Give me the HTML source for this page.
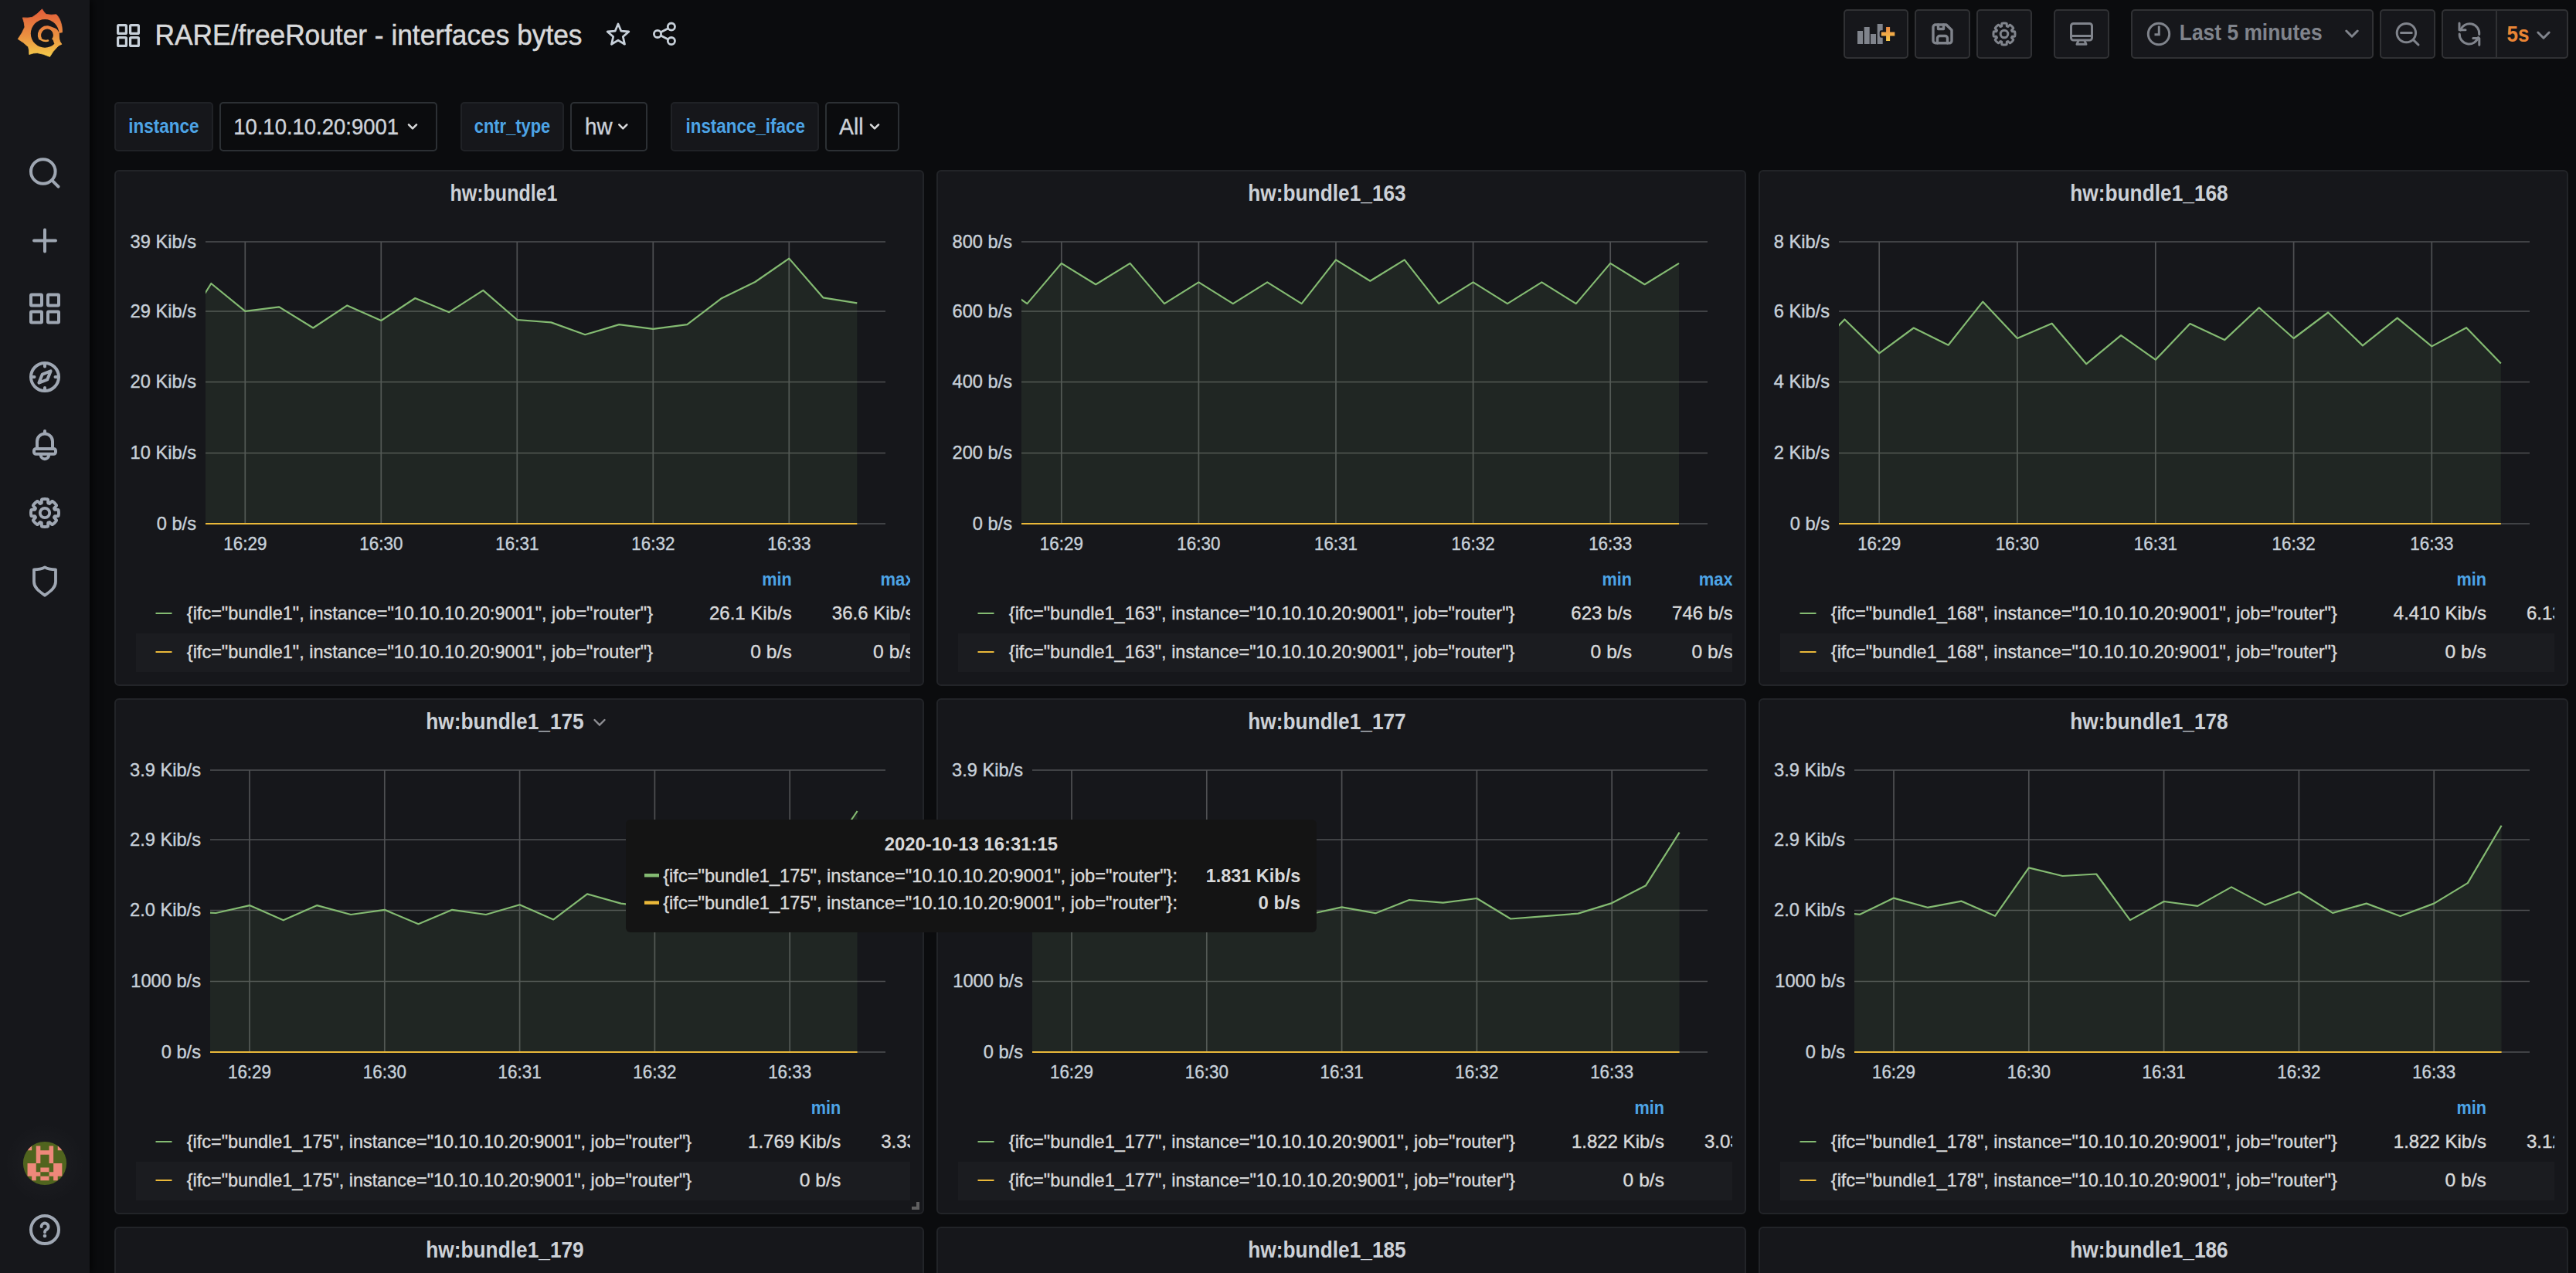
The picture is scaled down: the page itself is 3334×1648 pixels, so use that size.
<!DOCTYPE html><html><head><meta charset="utf-8"><title>RARE/freeRouter - interfaces bytes - Grafana</title><style>html,body{margin:0;padding:0;width:3334px;height:1648px;overflow:hidden;background:#0b0c0e;font-family:"Liberation Sans", sans-serif;}
.a{position:absolute;box-sizing:border-box}
.side{left:0;top:0;width:116px;height:1648px;background:#16171b;box-shadow:3px 0 10px rgba(0,0,0,0.75)}
.btn{background:#16171b;border:2px solid #303134;border-radius:5px;height:64px;top:12px}
.lbl{background:#16171b;border:2px solid #202226;border-radius:5px;height:64px;top:132px}
.val{background:#0b0c0e;border:2px solid #2c3034;border-radius:5px;height:64px;top:132px}
.panel{background:#16171b;border:2px solid #222428;border-radius:6px;width:1048px;height:668px}
.tip{background:#141414;border-radius:6px}
svg{position:absolute;left:0;top:0}
svg text{font-family:"Liberation Sans", sans-serif;paint-order:stroke fill}
svg text.r{stroke:currentColor}
</style></head><body><div class="a side"></div><div class="a btn" style="left:2386px;width:84px"></div><div class="a btn" style="left:2478px;width:72px"></div><div class="a btn" style="left:2558px;width:72px"></div><div class="a btn" style="left:2658px;width:72px"></div><div class="a btn" style="left:2758px;width:314px"></div><div class="a btn" style="left:3080px;width:72px"></div><div class="a btn" style="left:3160px;width:164px"></div><div class="a lbl" style="left:148px;width:128px"></div><div class="a lbl" style="left:596px;width:134px"></div><div class="a lbl" style="left:868px;width:192px"></div><div class="a val" style="left:284px;width:282px"></div><div class="a val" style="left:738px;width:100px"></div><div class="a val" style="left:1068px;width:96px"></div><div class="a panel" style="left:148px;top:220px"></div><div class="a panel" style="left:1212px;top:220px"></div><div class="a panel" style="left:2276px;top:220px"></div><div class="a panel" style="left:148px;top:904px"></div><div class="a panel" style="left:1212px;top:904px"></div><div class="a panel" style="left:2276px;top:904px"></div><div class="a panel" style="left:148px;top:1588px"></div><div class="a panel" style="left:1212px;top:1588px"></div><div class="a panel" style="left:2276px;top:1588px"></div><svg width="3334" height="1648" viewBox="0 0 3334 1648"><defs>
<linearGradient id="glogo" gradientUnits="userSpaceOnUse" x1="0" y1="14" x2="0" y2="73">
<stop offset="0" stop-color="#e3603a"/><stop offset="0.55" stop-color="#eb9040"/><stop offset="1" stop-color="#f4ca4a"/></linearGradient>
<linearGradient id="gadd" x1="0" y1="0" x2="0" y2="1">
<stop offset="0" stop-color="#ea8a43"/><stop offset="1" stop-color="#f8c94b"/></linearGradient>
</defs><path d="M54.5,11.8 Q57.01,16.44 59.9,18.5 Q65.79,19.80 72.9,18.8 C76.8,22.5 80.8,31 80.5,41.8 Q77.15,42.29 76.4,42.6 Q75.36,46.74 76.9,51.2 Q77.19,53.72 79.9,57.2 Q75.75,58.50 73.8,61.2 Q68.41,66.23 64.5,73.4 Q56.19,69.66 48.2,68.5 Q43.47,68.29 37.8,70.5 Q37.97,64.55 36.6,60.7 Q31.06,55.02 23.2,50.5 Q28.90,42.86 32,35.1 Q31.73,29.72 29.3,22.9 Q36.37,23.61 41.8,22.3 Q48.38,18.33 54.5,11.8 Z" fill="url(#glogo)" stroke="url(#glogo)" stroke-width="0.8" stroke-linejoin="round"/><circle cx="58.1" cy="43.4" r="18.3" fill="#16171b"/><path d="M68.74,51.99 A10.1,10.1 0 1 0 52.25,50.55" fill="none" stroke="url(#glogo)" stroke-width="4.3"/><path d="M52.25,50.55 Q57.96,53.86 62,52.6" fill="none" stroke="url(#glogo)" stroke-width="2.6" stroke-linecap="round"/><path d="M66,36.8 L67.1,34.9 Q70.5,35.6 72.4,37 Q74.4,38.6 75.3,40.2 L76.6,42.4 L76.9,51.4 L73.5,57.5 L70.3,56.8 L68.7,52 L71.1,45.5 L69.7,40.5 Z" fill="url(#glogo)"/><g fill="none" stroke="#9fa7b3" stroke-width="4" stroke-linecap="round" stroke-linejoin="round"><circle cx="55.8" cy="222" r="15.8"/><path d="M67.5,233.7 L75.5,241.7"/><path d="M44,311.5 H72 M58,297.5 V325.5"/><rect x="40" y="381.5" width="14" height="14" rx="1"/><rect x="62" y="381.5" width="14" height="14" rx="1"/><rect x="40" y="403.5" width="14" height="14" rx="1"/><rect x="62" y="403.5" width="14" height="14" rx="1"/><circle cx="58" cy="488" r="18"/><path d="M58,470 V474.5 M58,502 V506 M40,488 H44.5 M71.5,488 H76"/><path d="M65.6,480.4 L61.2,491.4 L50.4,495.6 L54.8,484.6 Z" stroke-width="4"/><path d="M58,558 V560.5"/><path d="M48,581 V571.5 A10,10 0 0 1 68,571.5 V581"/><rect x="44" y="581" width="28" height="6.8" rx="2.5"/><path d="M52.8,589 A5.2,5.2 0 0 0 63.2,589"/><path d="M76.00,664.00 L76.00,664.39 L75.98,664.79 L75.96,665.18 L75.93,665.57 L75.89,665.96 L75.85,666.35 L75.79,666.74 L75.73,667.13 L75.65,667.51 L75.52,667.88 L74.83,668.12 L73.64,668.19 L72.30,668.17 L71.22,668.17 L70.69,668.31 L70.59,668.58 L70.49,668.86 L70.38,669.13 L70.27,669.40 L70.14,669.66 L70.02,669.93 L70.29,670.40 L71.06,671.17 L72.02,672.10 L72.81,672.99 L73.14,673.64 L72.97,674.00 L72.74,674.32 L72.52,674.64 L72.28,674.96 L72.04,675.27 L71.79,675.57 L71.53,675.87 L71.27,676.16 L71.00,676.45 L70.73,676.73 L70.45,677.00 L70.16,677.27 L69.87,677.53 L69.57,677.79 L69.27,678.04 L68.96,678.28 L68.64,678.52 L68.32,678.74 L68.00,678.97 L67.64,679.14 L66.99,678.81 L66.10,678.02 L65.17,677.06 L64.40,676.29 L63.93,676.02 L63.66,676.14 L63.40,676.27 L63.13,676.38 L62.86,676.49 L62.58,676.59 L62.31,676.69 L62.17,677.22 L62.17,678.30 L62.19,679.64 L62.12,680.83 L61.88,681.52 L61.51,681.65 L61.13,681.73 L60.74,681.79 L60.35,681.85 L59.96,681.89 L59.57,681.93 L59.18,681.96 L58.79,681.98 L58.39,682.00 L58.00,682.00 L57.61,682.00 L57.21,681.98 L56.82,681.96 L56.43,681.93 L56.04,681.89 L55.65,681.85 L55.26,681.79 L54.87,681.73 L54.49,681.65 L54.12,681.52 L53.88,680.83 L53.81,679.64 L53.83,678.30 L53.83,677.22 L53.69,676.69 L53.42,676.59 L53.14,676.49 L52.87,676.38 L52.60,676.27 L52.34,676.14 L52.07,676.02 L51.60,676.29 L50.83,677.06 L49.90,678.02 L49.01,678.81 L48.36,679.14 L48.00,678.97 L47.68,678.74 L47.36,678.52 L47.04,678.28 L46.73,678.04 L46.43,677.79 L46.13,677.53 L45.84,677.27 L45.55,677.00 L45.27,676.73 L45.00,676.45 L44.73,676.16 L44.47,675.87 L44.21,675.57 L43.96,675.27 L43.72,674.96 L43.48,674.64 L43.26,674.32 L43.03,674.00 L42.86,673.64 L43.19,672.99 L43.98,672.10 L44.94,671.17 L45.71,670.40 L45.98,669.93 L45.86,669.66 L45.73,669.40 L45.62,669.13 L45.51,668.86 L45.41,668.58 L45.31,668.31 L44.78,668.17 L43.70,668.17 L42.36,668.19 L41.17,668.12 L40.48,667.88 L40.35,667.51 L40.27,667.13 L40.21,666.74 L40.15,666.35 L40.11,665.96 L40.07,665.57 L40.04,665.18 L40.02,664.79 L40.00,664.39 L40.00,664.00 L40.00,663.61 L40.02,663.21 L40.04,662.82 L40.07,662.43 L40.11,662.04 L40.15,661.65 L40.21,661.26 L40.27,660.87 L40.35,660.49 L40.48,660.12 L41.17,659.88 L42.36,659.81 L43.70,659.83 L44.78,659.83 L45.31,659.69 L45.41,659.42 L45.51,659.14 L45.62,658.87 L45.73,658.60 L45.86,658.34 L45.98,658.07 L45.71,657.60 L44.94,656.83 L43.98,655.90 L43.19,655.01 L42.86,654.36 L43.03,654.00 L43.26,653.68 L43.48,653.36 L43.72,653.04 L43.96,652.73 L44.21,652.43 L44.47,652.13 L44.73,651.84 L45.00,651.55 L45.27,651.27 L45.55,651.00 L45.84,650.73 L46.13,650.47 L46.43,650.21 L46.73,649.96 L47.04,649.72 L47.36,649.48 L47.68,649.26 L48.00,649.03 L48.36,648.86 L49.01,649.19 L49.90,649.98 L50.83,650.94 L51.60,651.71 L52.07,651.98 L52.34,651.86 L52.60,651.73 L52.87,651.62 L53.14,651.51 L53.42,651.41 L53.69,651.31 L53.83,650.78 L53.83,649.70 L53.81,648.36 L53.88,647.17 L54.12,646.48 L54.49,646.35 L54.87,646.27 L55.26,646.21 L55.65,646.15 L56.04,646.11 L56.43,646.07 L56.82,646.04 L57.21,646.02 L57.61,646.00 L58.00,646.00 L58.39,646.00 L58.79,646.02 L59.18,646.04 L59.57,646.07 L59.96,646.11 L60.35,646.15 L60.74,646.21 L61.13,646.27 L61.51,646.35 L61.88,646.48 L62.12,647.17 L62.19,648.36 L62.17,649.70 L62.17,650.78 L62.31,651.31 L62.58,651.41 L62.86,651.51 L63.13,651.62 L63.40,651.73 L63.66,651.86 L63.93,651.98 L64.40,651.71 L65.17,650.94 L66.10,649.98 L66.99,649.19 L67.64,648.86 L68.00,649.03 L68.32,649.26 L68.64,649.48 L68.96,649.72 L69.27,649.96 L69.57,650.21 L69.87,650.47 L70.16,650.73 L70.45,651.00 L70.73,651.27 L71.00,651.55 L71.27,651.84 L71.53,652.13 L71.79,652.43 L72.04,652.73 L72.28,653.04 L72.52,653.36 L72.74,653.68 L72.97,654.00 L73.14,654.36 L72.81,655.01 L72.02,655.90 L71.06,656.83 L70.29,657.60 L70.02,658.07 L70.14,658.34 L70.27,658.60 L70.38,658.87 L70.49,659.14 L70.59,659.42 L70.69,659.69 L71.22,659.83 L72.30,659.83 L73.64,659.81 L74.83,659.88 L75.52,660.12 L75.65,660.49 L75.73,660.87 L75.79,661.26 L75.85,661.65 L75.89,662.04 L75.93,662.43 L75.96,662.82 L75.98,663.21 L76.00,663.61Z" stroke-width="3.9" stroke-linejoin="round"/><circle cx="58" cy="664" r="6.2" stroke-width="3.8"/><path d="M44,737.3 C49.5,737.3 54,736.5 58,734.3 C62,736.5 66.5,737.3 72,737.3 V753.3 C72,760.5 66,765 58,770.8 C50,765 44,760.5 44,753.3 Z" stroke-width="3.8"/><circle cx="58" cy="1592" r="18"/></g><path d="M53.6,1588.2 A4.5,4.5 0 1 1 60.8,1591.6 Q58,1592.8 58,1595.2" fill="none" stroke="#9fa7b3" stroke-width="3.8" stroke-linecap="round" stroke-linejoin="round"/><circle cx="58" cy="1600" r="2.3" fill="#9fa7b3"/><radialGradient id="halo"><stop offset="0" stop-color="#ffffff" stop-opacity="0.035"/><stop offset="1" stop-color="#ffffff" stop-opacity="0"/></radialGradient><circle cx="58" cy="1506" r="52" fill="url(#halo)"/><clipPath id="avc"><circle cx="58" cy="1506" r="28.1"/></clipPath><g clip-path="url(#avc)"><rect x="29" y="1477" width="58" height="58" fill="#50641e"/><path d="M35.55,1483.55 h5.60 v5.60 h-5.60 Z M46.75,1483.55 h5.60 v5.60 h-5.60 Z M63.55,1483.55 h5.60 v5.60 h-5.60 Z M74.75,1483.55 h5.60 v5.60 h-5.60 Z M46.75,1489.15 h5.60 v5.60 h-5.60 Z M52.35,1489.15 h5.60 v5.60 h-5.60 Z M57.95,1489.15 h5.60 v5.60 h-5.60 Z M63.55,1489.15 h5.60 v5.60 h-5.60 Z M46.75,1494.75 h5.60 v5.60 h-5.60 Z M63.55,1494.75 h5.60 v5.60 h-5.60 Z M46.75,1500.35 h5.60 v5.60 h-5.60 Z M63.55,1500.35 h5.60 v5.60 h-5.60 Z M35.55,1505.95 h5.60 v5.60 h-5.60 Z M41.15,1505.95 h5.60 v5.60 h-5.60 Z M69.15,1505.95 h5.60 v5.60 h-5.60 Z M74.75,1505.95 h5.60 v5.60 h-5.60 Z M35.55,1511.55 h5.60 v5.60 h-5.60 Z M41.15,1511.55 h5.60 v5.60 h-5.60 Z M52.35,1511.55 h5.60 v5.60 h-5.60 Z M57.95,1511.55 h5.60 v5.60 h-5.60 Z M69.15,1511.55 h5.60 v5.60 h-5.60 Z M74.75,1511.55 h5.60 v5.60 h-5.60 Z M35.55,1517.15 h5.60 v5.60 h-5.60 Z M41.15,1517.15 h5.60 v5.60 h-5.60 Z M46.75,1517.15 h5.60 v5.60 h-5.60 Z M63.55,1517.15 h5.60 v5.60 h-5.60 Z M69.15,1517.15 h5.60 v5.60 h-5.60 Z M74.75,1517.15 h5.60 v5.60 h-5.60 Z M41.15,1522.75 h5.60 v5.60 h-5.60 Z M52.35,1522.75 h5.60 v5.60 h-5.60 Z M57.95,1522.75 h5.60 v5.60 h-5.60 Z M69.15,1522.75 h5.60 v5.60 h-5.60 Z " fill="#ee887a"/></g><g fill="none" stroke="#c7d0d9" stroke-width="3.2"><rect x="152.6" y="32.6" width="10.8" height="10.8" rx="1"/><rect x="168.6" y="32.6" width="10.8" height="10.8" rx="1"/><rect x="152.6" y="48.6" width="10.8" height="10.8" rx="1"/><rect x="168.6" y="48.6" width="10.8" height="10.8" rx="1"/></g><text x="200.5" y="58.2" font-size="36" fill="#d8d9da" textLength="553.0" lengthAdjust="spacingAndGlyphs" stroke="#d8d9da" stroke-width="0.5">RARE/freeRouter - interfaces bytes</text><path d="M800.0,31.0 L803.9,40.2 L813.8,41.0 L806.3,47.5 L808.5,57.2 L800.0,52.1 L791.5,57.2 L793.7,47.5 L786.2,41.0 L796.1,40.2Z" fill="none" stroke="#c7d0d9" stroke-width="2.8" stroke-linejoin="round"/><g fill="none" stroke="#c7d0d9" stroke-width="2.8"><circle cx="868.9" cy="34.6" r="4.6"/><circle cx="851" cy="43.9" r="4.6"/><circle cx="868.9" cy="53.1" r="4.6"/><path d="M855.1,41.8 L864.8,36.7 M855.1,46 L864.8,51"/></g><g fill="#80848c"><rect x="2404" y="40" width="7" height="17"/><rect x="2412.7" y="35" width="7" height="22"/><rect x="2421" y="44" width="7" height="13"/><rect x="2429.7" y="31" width="7" height="26"/></g><path d="M2441.1,35 h5 v6.5 h6.2 v5 h-6.2 v6.5 h-5 v-6.5 h-6.2 v-5 h6.2 z" fill="#16171b" stroke="#16171b" stroke-width="4.4" stroke-linejoin="round"/><path d="M2441.1,35 h5 v6.5 h6.2 v5 h-6.2 v6.5 h-5 v-6.5 h-6.2 v-5 h6.2 z" fill="url(#gadd)"/><g fill="none" stroke="#80848c" stroke-width="3.4" stroke-linejoin="round" stroke-linecap="round"><path d="M2505,32 H2519 L2526,39 V52.5 A3,3 0 0 1 2523,55.8 H2505 A3,3 0 0 1 2502,52.8 V35 A3,3 0 0 1 2505,32 Z"/><path d="M2508.5,32 V37.5 H2515.5 V32"/><path d="M2507.5,55.8 V49.5 A3,3 0 0 1 2510.5,46.5 H2517.5 A3,3 0 0 1 2520.5,49.5 V55.8"/><path d="M2608.00,44.00 L2608.00,44.31 L2607.99,44.61 L2607.97,44.92 L2607.95,45.22 L2607.92,45.52 L2607.88,45.83 L2607.84,46.13 L2607.79,46.43 L2607.73,46.73 L2607.63,47.02 L2607.12,47.21 L2606.23,47.28 L2605.24,47.28 L2604.43,47.29 L2604.04,47.41 L2603.96,47.63 L2603.88,47.84 L2603.79,48.06 L2603.70,48.27 L2603.61,48.48 L2603.51,48.69 L2603.70,49.05 L2604.26,49.63 L2604.97,50.33 L2605.54,51.00 L2605.77,51.50 L2605.64,51.78 L2605.47,52.03 L2605.29,52.28 L2605.11,52.52 L2604.92,52.76 L2604.72,53.00 L2604.53,53.23 L2604.32,53.46 L2604.11,53.68 L2603.90,53.90 L2603.68,54.11 L2603.46,54.32 L2603.23,54.53 L2603.00,54.72 L2602.76,54.92 L2602.52,55.11 L2602.28,55.29 L2602.03,55.47 L2601.78,55.64 L2601.50,55.77 L2601.00,55.54 L2600.33,54.97 L2599.63,54.26 L2599.05,53.70 L2598.69,53.51 L2598.48,53.61 L2598.27,53.70 L2598.06,53.79 L2597.84,53.88 L2597.63,53.96 L2597.41,54.04 L2597.29,54.43 L2597.28,55.24 L2597.28,56.23 L2597.21,57.12 L2597.02,57.63 L2596.73,57.73 L2596.43,57.79 L2596.13,57.84 L2595.83,57.88 L2595.52,57.92 L2595.22,57.95 L2594.92,57.97 L2594.61,57.99 L2594.31,58.00 L2594.00,58.00 L2593.69,58.00 L2593.39,57.99 L2593.08,57.97 L2592.78,57.95 L2592.48,57.92 L2592.17,57.88 L2591.87,57.84 L2591.57,57.79 L2591.27,57.73 L2590.98,57.63 L2590.79,57.12 L2590.72,56.23 L2590.72,55.24 L2590.71,54.43 L2590.59,54.04 L2590.37,53.96 L2590.16,53.88 L2589.94,53.79 L2589.73,53.70 L2589.52,53.61 L2589.31,53.51 L2588.95,53.70 L2588.37,54.26 L2587.67,54.97 L2587.00,55.54 L2586.50,55.77 L2586.22,55.64 L2585.97,55.47 L2585.72,55.29 L2585.48,55.11 L2585.24,54.92 L2585.00,54.72 L2584.77,54.53 L2584.54,54.32 L2584.32,54.11 L2584.10,53.90 L2583.89,53.68 L2583.68,53.46 L2583.47,53.23 L2583.28,53.00 L2583.08,52.76 L2582.89,52.52 L2582.71,52.28 L2582.53,52.03 L2582.36,51.78 L2582.23,51.50 L2582.46,51.00 L2583.03,50.33 L2583.74,49.63 L2584.30,49.05 L2584.49,48.69 L2584.39,48.48 L2584.30,48.27 L2584.21,48.06 L2584.12,47.84 L2584.04,47.63 L2583.96,47.41 L2583.57,47.29 L2582.76,47.28 L2581.77,47.28 L2580.88,47.21 L2580.37,47.02 L2580.27,46.73 L2580.21,46.43 L2580.16,46.13 L2580.12,45.83 L2580.08,45.52 L2580.05,45.22 L2580.03,44.92 L2580.01,44.61 L2580.00,44.31 L2580.00,44.00 L2580.00,43.69 L2580.01,43.39 L2580.03,43.08 L2580.05,42.78 L2580.08,42.48 L2580.12,42.17 L2580.16,41.87 L2580.21,41.57 L2580.27,41.27 L2580.37,40.98 L2580.88,40.79 L2581.77,40.72 L2582.76,40.72 L2583.57,40.71 L2583.96,40.59 L2584.04,40.37 L2584.12,40.16 L2584.21,39.94 L2584.30,39.73 L2584.39,39.52 L2584.49,39.31 L2584.30,38.95 L2583.74,38.37 L2583.03,37.67 L2582.46,37.00 L2582.23,36.50 L2582.36,36.22 L2582.53,35.97 L2582.71,35.72 L2582.89,35.48 L2583.08,35.24 L2583.28,35.00 L2583.47,34.77 L2583.68,34.54 L2583.89,34.32 L2584.10,34.10 L2584.32,33.89 L2584.54,33.68 L2584.77,33.47 L2585.00,33.28 L2585.24,33.08 L2585.48,32.89 L2585.72,32.71 L2585.97,32.53 L2586.22,32.36 L2586.50,32.23 L2587.00,32.46 L2587.67,33.03 L2588.37,33.74 L2588.95,34.30 L2589.31,34.49 L2589.52,34.39 L2589.73,34.30 L2589.94,34.21 L2590.16,34.12 L2590.37,34.04 L2590.59,33.96 L2590.71,33.57 L2590.72,32.76 L2590.72,31.77 L2590.79,30.88 L2590.98,30.37 L2591.27,30.27 L2591.57,30.21 L2591.87,30.16 L2592.17,30.12 L2592.48,30.08 L2592.78,30.05 L2593.08,30.03 L2593.39,30.01 L2593.69,30.00 L2594.00,30.00 L2594.31,30.00 L2594.61,30.01 L2594.92,30.03 L2595.22,30.05 L2595.52,30.08 L2595.83,30.12 L2596.13,30.16 L2596.43,30.21 L2596.73,30.27 L2597.02,30.37 L2597.21,30.88 L2597.28,31.77 L2597.28,32.76 L2597.29,33.57 L2597.41,33.96 L2597.63,34.04 L2597.84,34.12 L2598.06,34.21 L2598.27,34.30 L2598.48,34.39 L2598.69,34.49 L2599.05,34.30 L2599.63,33.74 L2600.33,33.03 L2601.00,32.46 L2601.50,32.23 L2601.78,32.36 L2602.03,32.53 L2602.28,32.71 L2602.52,32.89 L2602.76,33.08 L2603.00,33.28 L2603.23,33.47 L2603.46,33.68 L2603.68,33.89 L2603.90,34.10 L2604.11,34.32 L2604.32,34.54 L2604.53,34.77 L2604.72,35.00 L2604.92,35.24 L2605.11,35.48 L2605.29,35.72 L2605.47,35.97 L2605.64,36.22 L2605.77,36.50 L2605.54,37.00 L2604.97,37.67 L2604.26,38.37 L2603.70,38.95 L2603.51,39.31 L2603.61,39.52 L2603.70,39.73 L2603.79,39.94 L2603.88,40.16 L2603.96,40.37 L2604.04,40.59 L2604.43,40.71 L2605.24,40.72 L2606.23,40.72 L2607.12,40.79 L2607.63,40.98 L2607.73,41.27 L2607.79,41.57 L2607.84,41.87 L2607.88,42.17 L2607.92,42.48 L2607.95,42.78 L2607.97,43.08 L2607.99,43.39 L2608.00,43.69Z" stroke-width="3" stroke-linejoin="round"/><circle cx="2594" cy="44" r="4.8" stroke-width="3"/><rect x="2680.5" y="30.5" width="27" height="21.5" rx="3" stroke-width="3"/><path d="M2681,46.5 H2707" stroke-width="3"/><path d="M2690,52.5 L2688,57.3 H2700 L2698,52.5" stroke-width="3"/><circle cx="2794" cy="44" r="13.7" stroke-width="3"/><path d="M2794.3,33.5 V44.8 H2788.5" stroke-width="3" stroke-linecap="butt" stroke-linejoin="miter"/><circle cx="3114.4" cy="42.6" r="12.2" stroke-width="3"/><path d="M3107.5,42.6 H3121.3 M3123.5,51.6 L3130,58" stroke-width="3"/><path d="M3183.2,44 A12.5,12.5 0 0 0 3207.5,48.5" stroke-width="3"/><path d="M3208.7,44.5 A12.5,12.5 0 0 0 3184.5,39" stroke-width="3"/><path d="M3183,30 V38.8 H3191" stroke-width="3"/><path d="M3208.8,58.3 V49.5 H3200.8" stroke-width="3"/><path d="M3036.8,40 L3044,47.2 L3051.2,40" stroke-width="3"/><path d="M3284.8,42 L3292,49.2 L3299.2,42" stroke-width="3"/></g><path d="M3231,14 V74" stroke="#303134" stroke-width="2"/><text x="2820.8" y="52.1" font-size="29.5" fill="#80848c" font-weight="bold" textLength="184.8" lengthAdjust="spacingAndGlyphs">Last 5 minutes</text><text x="3244.5" y="54.3" font-size="29.5" fill="#ea8535" font-weight="bold" textLength="29.0" lengthAdjust="spacingAndGlyphs">5s</text><text x="166.2" y="172.3" font-size="25.5" fill="#4da4e6" font-weight="bold" textLength="91.2" lengthAdjust="spacingAndGlyphs">instance</text><text x="302.2" y="173.8" font-size="29.5" fill="#cdd2d9" stroke="#cdd2d9" stroke-width="0.4" textLength="213.8" lengthAdjust="spacingAndGlyphs">10.10.10.20:9001</text><text x="613.8" y="172.2" font-size="26" fill="#4da4e6" font-weight="bold" textLength="98.5" lengthAdjust="spacingAndGlyphs">cntr_type</text><text x="757.0" y="173.8" font-size="29.5" fill="#cdd2d9" stroke="#cdd2d9" stroke-width="0.4" textLength="35.5" lengthAdjust="spacingAndGlyphs">hw</text><text x="887.5" y="172.2" font-size="26" fill="#4da4e6" font-weight="bold" textLength="154.4" lengthAdjust="spacingAndGlyphs">instance_iface</text><text x="1086.0" y="173.8" font-size="29.5" fill="#cdd2d9" stroke="#cdd2d9" stroke-width="0.4" textLength="31.5" lengthAdjust="spacingAndGlyphs">All</text><g fill="none" stroke="#d8d9da" stroke-width="2.6" stroke-linecap="round" stroke-linejoin="round"><path d="M529,161.3 L534,166.3 L539,161.3"/><path d="M801.3,161.3 L806.3,166.3 L811.3,161.3"/><path d="M1127,161.3 L1132,166.3 L1137,161.3"/></g><text x="652.0" y="260.0" font-size="29" fill="#ccd1d8" font-weight="bold" text-anchor="middle" textLength="139.0" lengthAdjust="spacingAndGlyphs">hw:bundle1</text><path d="M266,313.0 H1146 M266,403.0 H1146 M266,494.5 H1146 M266,586.5 H1146 M266,678.0 H1146 M317.3,313 V678 M493.3,313 V678 M669.3,313 V678 M845.3,313 V678 M1021.3,313 V678" stroke="rgba(205,210,210,0.31)" stroke-width="1.7" fill="none"/><text x="254.0" y="320.6" font-size="24" fill="#c7d0d9" stroke="#c7d0d9" stroke-width="0.4" text-anchor="end" textLength="85.4" lengthAdjust="spacingAndGlyphs">39 Kib/s</text><text x="254.0" y="410.6" font-size="24" fill="#c7d0d9" stroke="#c7d0d9" stroke-width="0.4" text-anchor="end" textLength="85.4" lengthAdjust="spacingAndGlyphs">29 Kib/s</text><text x="254.0" y="502.1" font-size="24" fill="#c7d0d9" stroke="#c7d0d9" stroke-width="0.4" text-anchor="end" textLength="85.4" lengthAdjust="spacingAndGlyphs">20 Kib/s</text><text x="254.0" y="594.1" font-size="24" fill="#c7d0d9" stroke="#c7d0d9" stroke-width="0.4" text-anchor="end" textLength="85.4" lengthAdjust="spacingAndGlyphs">10 Kib/s</text><text x="254.0" y="685.6" font-size="24" fill="#c7d0d9" stroke="#c7d0d9" stroke-width="0.4" text-anchor="end" textLength="51.3" lengthAdjust="spacingAndGlyphs">0 b/s</text><text x="317.3" y="711.8" font-size="24" fill="#c7d0d9" stroke="#c7d0d9" stroke-width="0.4" text-anchor="middle" textLength="56.1" lengthAdjust="spacingAndGlyphs">16:29</text><text x="493.3" y="711.8" font-size="24" fill="#c7d0d9" stroke="#c7d0d9" stroke-width="0.4" text-anchor="middle" textLength="56.1" lengthAdjust="spacingAndGlyphs">16:30</text><text x="669.3" y="711.8" font-size="24" fill="#c7d0d9" stroke="#c7d0d9" stroke-width="0.4" text-anchor="middle" textLength="56.1" lengthAdjust="spacingAndGlyphs">16:31</text><text x="845.3" y="711.8" font-size="24" fill="#c7d0d9" stroke="#c7d0d9" stroke-width="0.4" text-anchor="middle" textLength="56.1" lengthAdjust="spacingAndGlyphs">16:32</text><text x="1021.3" y="711.8" font-size="24" fill="#c7d0d9" stroke="#c7d0d9" stroke-width="0.4" text-anchor="middle" textLength="56.1" lengthAdjust="spacingAndGlyphs">16:33</text><clipPath id="c148_220"><rect x="266" y="280" width="880" height="400"/></clipPath><g clip-path="url(#c148_220)"><path d="M229.3,678 L229.3,438.0 L273.3,367.0 L317.3,402.8 L361.3,397.4 L405.3,424.5 L449.3,395.4 L493.3,415.0 L537.3,386.0 L581.3,404.2 L625.3,375.8 L669.3,414.0 L713.3,417.4 L757.3,433.2 L801.3,420.1 L845.3,425.8 L889.3,420.1 L933.3,386.6 L977.3,365.0 L1021.3,334.6 L1065.3,385.3 L1109.3,392.4 L1109.3,678 Z" fill="rgba(126,178,109,0.1)"/><polyline points="229.3,438.0 273.3,367.0 317.3,402.8 361.3,397.4 405.3,424.5 449.3,395.4 493.3,415.0 537.3,386.0 581.3,404.2 625.3,375.8 669.3,414.0 713.3,417.4 757.3,433.2 801.3,420.1 845.3,425.8 889.3,420.1 933.3,386.6 977.3,365.0 1021.3,334.6 1065.3,385.3 1109.3,392.4" fill="none" stroke="#84bb72" stroke-width="2.2" stroke-linejoin="round"/><path d="M266,678 H1109.3" stroke="#eab839" stroke-width="2.2"/></g><rect x="176" y="820" width="1002" height="50" fill="#1b1c20"/><clipPath id="l148_220"><rect x="168" y="720" width="1010" height="160"/></clipPath><g clip-path="url(#l148_220)"><path d="M201.5,794 H222.5" stroke="#84bb72" stroke-width="2"/><path d="M201.5,844 H222.5" stroke="#eab839" stroke-width="2"/><text x="241.8" y="801.7" font-size="24" fill="#d8d9da" stroke="#d8d9da" stroke-width="0.4" textLength="603.2" lengthAdjust="spacingAndGlyphs">{ifc=&quot;bundle1&quot;, instance=&quot;10.10.10.20:9001&quot;, job=&quot;router&quot;}</text><text x="241.8" y="851.7" font-size="24" fill="#d8d9da" stroke="#d8d9da" stroke-width="0.4" textLength="603.2" lengthAdjust="spacingAndGlyphs">{ifc=&quot;bundle1&quot;, instance=&quot;10.10.10.20:9001&quot;, job=&quot;router&quot;}</text><text x="1024.7" y="758.3" font-size="24" fill="#4da4e6" font-weight="bold" text-anchor="end" textLength="38.5" lengthAdjust="spacingAndGlyphs">min</text><text x="1183.5" y="758.3" font-size="24" fill="#4da4e6" font-weight="bold" text-anchor="end" textLength="44.0" lengthAdjust="spacingAndGlyphs">max</text><text x="1024.7" y="801.7" font-size="24" fill="#d8d9da" stroke="#d8d9da" stroke-width="0.4" text-anchor="end" textLength="106.7" lengthAdjust="spacingAndGlyphs">26.1 Kib/s</text><text x="1024.7" y="851.5" font-size="24" fill="#d8d9da" stroke="#d8d9da" stroke-width="0.4" text-anchor="end" textLength="53.4" lengthAdjust="spacingAndGlyphs">0 b/s</text><text x="1183.5" y="801.7" font-size="24" fill="#d8d9da" stroke="#d8d9da" stroke-width="0.4" text-anchor="end" textLength="106.7" lengthAdjust="spacingAndGlyphs">36.6 Kib/s</text><text x="1183.5" y="851.5" font-size="24" fill="#d8d9da" stroke="#d8d9da" stroke-width="0.4" text-anchor="end" textLength="53.4" lengthAdjust="spacingAndGlyphs">0 b/s</text></g><text x="1717.5" y="260.0" font-size="29" fill="#ccd1d8" font-weight="bold" text-anchor="middle" textLength="204.5" lengthAdjust="spacingAndGlyphs">hw:bundle1_163</text><path d="M1322,313.0 H2210 M1322,403.0 H2210 M1322,494.5 H2210 M1322,586.5 H2210 M1322,678.0 H2210 M1373.8,313 V678 M1551.4,313 V678 M1729.0,313 V678 M1906.6,313 V678 M2084.2,313 V678" stroke="rgba(205,210,210,0.31)" stroke-width="1.7" fill="none"/><text x="1310.0" y="320.6" font-size="24" fill="#c7d0d9" stroke="#c7d0d9" stroke-width="0.4" text-anchor="end" textLength="77.5" lengthAdjust="spacingAndGlyphs">800 b/s</text><text x="1310.0" y="410.6" font-size="24" fill="#c7d0d9" stroke="#c7d0d9" stroke-width="0.4" text-anchor="end" textLength="77.5" lengthAdjust="spacingAndGlyphs">600 b/s</text><text x="1310.0" y="502.1" font-size="24" fill="#c7d0d9" stroke="#c7d0d9" stroke-width="0.4" text-anchor="end" textLength="77.5" lengthAdjust="spacingAndGlyphs">400 b/s</text><text x="1310.0" y="594.1" font-size="24" fill="#c7d0d9" stroke="#c7d0d9" stroke-width="0.4" text-anchor="end" textLength="77.5" lengthAdjust="spacingAndGlyphs">200 b/s</text><text x="1310.0" y="685.6" font-size="24" fill="#c7d0d9" stroke="#c7d0d9" stroke-width="0.4" text-anchor="end" textLength="51.3" lengthAdjust="spacingAndGlyphs">0 b/s</text><text x="1373.8" y="711.8" font-size="24" fill="#c7d0d9" stroke="#c7d0d9" stroke-width="0.4" text-anchor="middle" textLength="56.1" lengthAdjust="spacingAndGlyphs">16:29</text><text x="1551.4" y="711.8" font-size="24" fill="#c7d0d9" stroke="#c7d0d9" stroke-width="0.4" text-anchor="middle" textLength="56.1" lengthAdjust="spacingAndGlyphs">16:30</text><text x="1729.0" y="711.8" font-size="24" fill="#c7d0d9" stroke="#c7d0d9" stroke-width="0.4" text-anchor="middle" textLength="56.1" lengthAdjust="spacingAndGlyphs">16:31</text><text x="1906.6" y="711.8" font-size="24" fill="#c7d0d9" stroke="#c7d0d9" stroke-width="0.4" text-anchor="middle" textLength="56.1" lengthAdjust="spacingAndGlyphs">16:32</text><text x="2084.2" y="711.8" font-size="24" fill="#c7d0d9" stroke="#c7d0d9" stroke-width="0.4" text-anchor="middle" textLength="56.1" lengthAdjust="spacingAndGlyphs">16:33</text><clipPath id="c1212_220"><rect x="1322" y="280" width="888" height="400"/></clipPath><g clip-path="url(#c1212_220)"><path d="M1285.0,678 L1285.0,361.9 L1329.4,393.1 L1373.8,340.9 L1418.2,368.2 L1462.6,340.9 L1507.0,393.1 L1551.4,365.4 L1595.8,393.1 L1640.2,365.4 L1684.6,393.1 L1729.0,336.4 L1773.4,363.7 L1817.8,336.4 L1862.2,393.1 L1906.6,365.4 L1951.0,393.1 L1995.4,365.4 L2039.8,393.1 L2084.2,340.9 L2128.6,368.2 L2173.0,340.9 L2173.0,678 Z" fill="rgba(126,178,109,0.1)"/><polyline points="1285.0,361.9 1329.4,393.1 1373.8,340.9 1418.2,368.2 1462.6,340.9 1507.0,393.1 1551.4,365.4 1595.8,393.1 1640.2,365.4 1684.6,393.1 1729.0,336.4 1773.4,363.7 1817.8,336.4 1862.2,393.1 1906.6,365.4 1951.0,393.1 1995.4,365.4 2039.8,393.1 2084.2,340.9 2128.6,368.2 2173.0,340.9" fill="none" stroke="#84bb72" stroke-width="2.2" stroke-linejoin="round"/><path d="M1322,678 H2173.0" stroke="#eab839" stroke-width="2.2"/></g><rect x="1240" y="820" width="1002" height="50" fill="#1b1c20"/><clipPath id="l1212_220"><rect x="1232" y="720" width="1010" height="160"/></clipPath><g clip-path="url(#l1212_220)"><path d="M1265.5,794 H1286.5" stroke="#84bb72" stroke-width="2"/><path d="M1265.5,844 H1286.5" stroke="#eab839" stroke-width="2"/><text x="1305.8" y="801.7" font-size="24" fill="#d8d9da" stroke="#d8d9da" stroke-width="0.4" textLength="654.5" lengthAdjust="spacingAndGlyphs">{ifc=&quot;bundle1_163&quot;, instance=&quot;10.10.10.20:9001&quot;, job=&quot;router&quot;}</text><text x="1305.8" y="851.7" font-size="24" fill="#d8d9da" stroke="#d8d9da" stroke-width="0.4" textLength="654.5" lengthAdjust="spacingAndGlyphs">{ifc=&quot;bundle1_163&quot;, instance=&quot;10.10.10.20:9001&quot;, job=&quot;router&quot;}</text><text x="2112.0" y="758.3" font-size="24" fill="#4da4e6" font-weight="bold" text-anchor="end" textLength="38.5" lengthAdjust="spacingAndGlyphs">min</text><text x="2242.8" y="758.3" font-size="24" fill="#4da4e6" font-weight="bold" text-anchor="end" textLength="44.0" lengthAdjust="spacingAndGlyphs">max</text><text x="2112.0" y="801.7" font-size="24" fill="#d8d9da" stroke="#d8d9da" stroke-width="0.4" text-anchor="end" textLength="78.7" lengthAdjust="spacingAndGlyphs">623 b/s</text><text x="2112.0" y="851.5" font-size="24" fill="#d8d9da" stroke="#d8d9da" stroke-width="0.4" text-anchor="end" textLength="53.4" lengthAdjust="spacingAndGlyphs">0 b/s</text><text x="2242.8" y="801.7" font-size="24" fill="#d8d9da" stroke="#d8d9da" stroke-width="0.4" text-anchor="end" textLength="78.7" lengthAdjust="spacingAndGlyphs">746 b/s</text><text x="2242.8" y="851.5" font-size="24" fill="#d8d9da" stroke="#d8d9da" stroke-width="0.4" text-anchor="end" textLength="53.4" lengthAdjust="spacingAndGlyphs">0 b/s</text></g><text x="2781.5" y="260.0" font-size="29" fill="#ccd1d8" font-weight="bold" text-anchor="middle" textLength="204.5" lengthAdjust="spacingAndGlyphs">hw:bundle1_168</text><path d="M2380,313.0 H3274 M2380,403.0 H3274 M2380,494.5 H3274 M2380,586.5 H3274 M2380,678.0 H3274 M2432.2,313 V678 M2610.9,313 V678 M2789.8,313 V678 M2968.6,313 V678 M3147.3,313 V678" stroke="rgba(205,210,210,0.31)" stroke-width="1.7" fill="none"/><text x="2368.0" y="320.6" font-size="24" fill="#c7d0d9" stroke="#c7d0d9" stroke-width="0.4" text-anchor="end" textLength="72.3" lengthAdjust="spacingAndGlyphs">8 Kib/s</text><text x="2368.0" y="410.6" font-size="24" fill="#c7d0d9" stroke="#c7d0d9" stroke-width="0.4" text-anchor="end" textLength="72.3" lengthAdjust="spacingAndGlyphs">6 Kib/s</text><text x="2368.0" y="502.1" font-size="24" fill="#c7d0d9" stroke="#c7d0d9" stroke-width="0.4" text-anchor="end" textLength="72.3" lengthAdjust="spacingAndGlyphs">4 Kib/s</text><text x="2368.0" y="594.1" font-size="24" fill="#c7d0d9" stroke="#c7d0d9" stroke-width="0.4" text-anchor="end" textLength="72.3" lengthAdjust="spacingAndGlyphs">2 Kib/s</text><text x="2368.0" y="685.6" font-size="24" fill="#c7d0d9" stroke="#c7d0d9" stroke-width="0.4" text-anchor="end" textLength="51.3" lengthAdjust="spacingAndGlyphs">0 b/s</text><text x="2432.2" y="711.8" font-size="24" fill="#c7d0d9" stroke="#c7d0d9" stroke-width="0.4" text-anchor="middle" textLength="56.1" lengthAdjust="spacingAndGlyphs">16:29</text><text x="2610.9" y="711.8" font-size="24" fill="#c7d0d9" stroke="#c7d0d9" stroke-width="0.4" text-anchor="middle" textLength="56.1" lengthAdjust="spacingAndGlyphs">16:30</text><text x="2789.8" y="711.8" font-size="24" fill="#c7d0d9" stroke="#c7d0d9" stroke-width="0.4" text-anchor="middle" textLength="56.1" lengthAdjust="spacingAndGlyphs">16:31</text><text x="2968.6" y="711.8" font-size="24" fill="#c7d0d9" stroke="#c7d0d9" stroke-width="0.4" text-anchor="middle" textLength="56.1" lengthAdjust="spacingAndGlyphs">16:32</text><text x="3147.3" y="711.8" font-size="24" fill="#c7d0d9" stroke="#c7d0d9" stroke-width="0.4" text-anchor="middle" textLength="56.1" lengthAdjust="spacingAndGlyphs">16:33</text><clipPath id="c2276_220"><rect x="2380" y="280" width="894" height="400"/></clipPath><g clip-path="url(#c2276_220)"><path d="M2342.8,678 L2342.8,459.7 L2387.4,413.5 L2432.2,457.4 L2476.8,424.5 L2521.6,446.7 L2566.2,390.6 L2610.9,438.0 L2655.7,418.7 L2700.3,471.2 L2745.1,434.2 L2789.8,465.7 L2834.4,419.0 L2879.2,440.1 L2923.8,398.3 L2968.6,438.0 L3013.2,404.5 L3057.9,447.4 L3102.7,411.7 L3147.3,448.4 L3192.1,424.2 L3236.8,470.5 L3236.8,678 Z" fill="rgba(126,178,109,0.1)"/><polyline points="2342.8,459.7 2387.4,413.5 2432.2,457.4 2476.8,424.5 2521.6,446.7 2566.2,390.6 2610.9,438.0 2655.7,418.7 2700.3,471.2 2745.1,434.2 2789.8,465.7 2834.4,419.0 2879.2,440.1 2923.8,398.3 2968.6,438.0 3013.2,404.5 3057.9,447.4 3102.7,411.7 3147.3,448.4 3192.1,424.2 3236.8,470.5" fill="none" stroke="#84bb72" stroke-width="2.2" stroke-linejoin="round"/><path d="M2380,678 H3236.8" stroke="#eab839" stroke-width="2.2"/></g><rect x="2304" y="820" width="1002" height="50" fill="#1b1c20"/><clipPath id="l2276_220"><rect x="2296" y="720" width="1010" height="160"/></clipPath><g clip-path="url(#l2276_220)"><path d="M2329.5,794 H2350.5" stroke="#84bb72" stroke-width="2"/><path d="M2329.5,844 H2350.5" stroke="#eab839" stroke-width="2"/><text x="2369.8" y="801.7" font-size="24" fill="#d8d9da" stroke="#d8d9da" stroke-width="0.4" textLength="655.0" lengthAdjust="spacingAndGlyphs">{ifc=&quot;bundle1_168&quot;, instance=&quot;10.10.10.20:9001&quot;, job=&quot;router&quot;}</text><text x="2369.8" y="851.7" font-size="24" fill="#d8d9da" stroke="#d8d9da" stroke-width="0.4" textLength="655.0" lengthAdjust="spacingAndGlyphs">{ifc=&quot;bundle1_168&quot;, instance=&quot;10.10.10.20:9001&quot;, job=&quot;router&quot;}</text><text x="3217.9" y="758.3" font-size="24" fill="#4da4e6" font-weight="bold" text-anchor="end" textLength="38.5" lengthAdjust="spacingAndGlyphs">min</text><text x="3390.0" y="758.3" font-size="24" fill="#4da4e6" font-weight="bold" text-anchor="end" textLength="44.0" lengthAdjust="spacingAndGlyphs">max</text><text x="3217.9" y="801.7" font-size="24" fill="#d8d9da" stroke="#d8d9da" stroke-width="0.4" text-anchor="end" textLength="120.1" lengthAdjust="spacingAndGlyphs">4.410 Kib/s</text><text x="3217.9" y="851.5" font-size="24" fill="#d8d9da" stroke="#d8d9da" stroke-width="0.4" text-anchor="end" textLength="53.4" lengthAdjust="spacingAndGlyphs">0 b/s</text><text x="3390.0" y="801.7" font-size="24" fill="#d8d9da" stroke="#d8d9da" stroke-width="0.4" text-anchor="end" textLength="120.1" lengthAdjust="spacingAndGlyphs">6.133 Kib/s</text><text x="3390.0" y="851.5" font-size="24" fill="#d8d9da" stroke="#d8d9da" stroke-width="0.4" text-anchor="end" textLength="53.4" lengthAdjust="spacingAndGlyphs">0 b/s</text></g><text x="653.5" y="944.0" font-size="29" fill="#ccd1d8" font-weight="bold" text-anchor="middle" textLength="204.5" lengthAdjust="spacingAndGlyphs">hw:bundle1_175</text><path d="M272,997.0 H1146 M272,1087.0 H1146 M272,1178.5 H1146 M272,1270.5 H1146 M272,1362.0 H1146 M323.0,997 V1362 M497.8,997 V1362 M672.6,997 V1362 M847.4,997 V1362 M1022.2,997 V1362" stroke="rgba(205,210,210,0.31)" stroke-width="1.7" fill="none"/><text x="260.0" y="1004.6" font-size="24" fill="#c7d0d9" stroke="#c7d0d9" stroke-width="0.4" text-anchor="end" textLength="92.0" lengthAdjust="spacingAndGlyphs">3.9 Kib/s</text><text x="260.0" y="1094.6" font-size="24" fill="#c7d0d9" stroke="#c7d0d9" stroke-width="0.4" text-anchor="end" textLength="92.0" lengthAdjust="spacingAndGlyphs">2.9 Kib/s</text><text x="260.0" y="1186.1" font-size="24" fill="#c7d0d9" stroke="#c7d0d9" stroke-width="0.4" text-anchor="end" textLength="92.0" lengthAdjust="spacingAndGlyphs">2.0 Kib/s</text><text x="260.0" y="1278.1" font-size="24" fill="#c7d0d9" stroke="#c7d0d9" stroke-width="0.4" text-anchor="end" textLength="90.7" lengthAdjust="spacingAndGlyphs">1000 b/s</text><text x="260.0" y="1369.6" font-size="24" fill="#c7d0d9" stroke="#c7d0d9" stroke-width="0.4" text-anchor="end" textLength="51.3" lengthAdjust="spacingAndGlyphs">0 b/s</text><text x="323.0" y="1395.8" font-size="24" fill="#c7d0d9" stroke="#c7d0d9" stroke-width="0.4" text-anchor="middle" textLength="56.1" lengthAdjust="spacingAndGlyphs">16:29</text><text x="497.8" y="1395.8" font-size="24" fill="#c7d0d9" stroke="#c7d0d9" stroke-width="0.4" text-anchor="middle" textLength="56.1" lengthAdjust="spacingAndGlyphs">16:30</text><text x="672.6" y="1395.8" font-size="24" fill="#c7d0d9" stroke="#c7d0d9" stroke-width="0.4" text-anchor="middle" textLength="56.1" lengthAdjust="spacingAndGlyphs">16:31</text><text x="847.4" y="1395.8" font-size="24" fill="#c7d0d9" stroke="#c7d0d9" stroke-width="0.4" text-anchor="middle" textLength="56.1" lengthAdjust="spacingAndGlyphs">16:32</text><text x="1022.2" y="1395.8" font-size="24" fill="#c7d0d9" stroke="#c7d0d9" stroke-width="0.4" text-anchor="middle" textLength="56.1" lengthAdjust="spacingAndGlyphs">16:33</text><clipPath id="c148_904"><rect x="272" y="964" width="874" height="400"/></clipPath><g clip-path="url(#c148_904)"><path d="M235.6,1362 L235.6,1180.0 L279.3,1182.0 L323.0,1172.1 L366.7,1191.3 L410.4,1172.1 L454.1,1184.0 L497.8,1177.8 L541.5,1196.2 L585.2,1177.8 L628.9,1184.0 L672.6,1171.3 L716.3,1190.4 L760.0,1157.4 L803.7,1169.6 L847.4,1175.0 L891.1,1185.0 L934.8,1170.0 L978.5,1178.0 L1022.2,1150.0 L1065.9,1114.0 L1109.6,1050.0 L1109.6,1362 Z" fill="rgba(126,178,109,0.1)"/><polyline points="235.6,1180.0 279.3,1182.0 323.0,1172.1 366.7,1191.3 410.4,1172.1 454.1,1184.0 497.8,1177.8 541.5,1196.2 585.2,1177.8 628.9,1184.0 672.6,1171.3 716.3,1190.4 760.0,1157.4 803.7,1169.6 847.4,1175.0 891.1,1185.0 934.8,1170.0 978.5,1178.0 1022.2,1150.0 1065.9,1114.0 1109.6,1050.0" fill="none" stroke="#84bb72" stroke-width="2.2" stroke-linejoin="round"/><path d="M272,1362 H1109.6" stroke="#eab839" stroke-width="2.2"/></g><rect x="176" y="1504" width="1002" height="50" fill="#1b1c20"/><clipPath id="l148_904"><rect x="168" y="1404" width="1010" height="160"/></clipPath><g clip-path="url(#l148_904)"><path d="M201.5,1478 H222.5" stroke="#84bb72" stroke-width="2"/><path d="M201.5,1528 H222.5" stroke="#eab839" stroke-width="2"/><text x="241.8" y="1485.7" font-size="24" fill="#d8d9da" stroke="#d8d9da" stroke-width="0.4" textLength="653.3" lengthAdjust="spacingAndGlyphs">{ifc=&quot;bundle1_175&quot;, instance=&quot;10.10.10.20:9001&quot;, job=&quot;router&quot;}</text><text x="241.8" y="1535.7" font-size="24" fill="#d8d9da" stroke="#d8d9da" stroke-width="0.4" textLength="653.3" lengthAdjust="spacingAndGlyphs">{ifc=&quot;bundle1_175&quot;, instance=&quot;10.10.10.20:9001&quot;, job=&quot;router&quot;}</text><text x="1088.2" y="1442.3" font-size="24" fill="#4da4e6" font-weight="bold" text-anchor="end" textLength="38.5" lengthAdjust="spacingAndGlyphs">min</text><text x="1260.3" y="1442.3" font-size="24" fill="#4da4e6" font-weight="bold" text-anchor="end" textLength="44.0" lengthAdjust="spacingAndGlyphs">max</text><text x="1088.2" y="1485.7" font-size="24" fill="#d8d9da" stroke="#d8d9da" stroke-width="0.4" text-anchor="end" textLength="120.1" lengthAdjust="spacingAndGlyphs">1.769 Kib/s</text><text x="1088.2" y="1535.5" font-size="24" fill="#d8d9da" stroke="#d8d9da" stroke-width="0.4" text-anchor="end" textLength="53.4" lengthAdjust="spacingAndGlyphs">0 b/s</text><text x="1260.3" y="1485.7" font-size="24" fill="#d8d9da" stroke="#d8d9da" stroke-width="0.4" text-anchor="end" textLength="120.1" lengthAdjust="spacingAndGlyphs">3.333 Kib/s</text><text x="1260.3" y="1535.5" font-size="24" fill="#d8d9da" stroke="#d8d9da" stroke-width="0.4" text-anchor="end" textLength="53.4" lengthAdjust="spacingAndGlyphs">0 b/s</text></g><text x="1717.5" y="944.0" font-size="29" fill="#ccd1d8" font-weight="bold" text-anchor="middle" textLength="204.5" lengthAdjust="spacingAndGlyphs">hw:bundle1_177</text><path d="M1336,997.0 H2210 M1336,1087.0 H2210 M1336,1178.5 H2210 M1336,1270.5 H2210 M1336,1362.0 H2210 M1387.0,997 V1362 M1561.8,997 V1362 M1736.6,997 V1362 M1911.4,997 V1362 M2086.2,997 V1362" stroke="rgba(205,210,210,0.31)" stroke-width="1.7" fill="none"/><text x="1324.0" y="1004.6" font-size="24" fill="#c7d0d9" stroke="#c7d0d9" stroke-width="0.4" text-anchor="end" textLength="92.0" lengthAdjust="spacingAndGlyphs">3.9 Kib/s</text><text x="1324.0" y="1094.6" font-size="24" fill="#c7d0d9" stroke="#c7d0d9" stroke-width="0.4" text-anchor="end" textLength="92.0" lengthAdjust="spacingAndGlyphs">2.9 Kib/s</text><text x="1324.0" y="1186.1" font-size="24" fill="#c7d0d9" stroke="#c7d0d9" stroke-width="0.4" text-anchor="end" textLength="92.0" lengthAdjust="spacingAndGlyphs">2.0 Kib/s</text><text x="1324.0" y="1278.1" font-size="24" fill="#c7d0d9" stroke="#c7d0d9" stroke-width="0.4" text-anchor="end" textLength="90.7" lengthAdjust="spacingAndGlyphs">1000 b/s</text><text x="1324.0" y="1369.6" font-size="24" fill="#c7d0d9" stroke="#c7d0d9" stroke-width="0.4" text-anchor="end" textLength="51.3" lengthAdjust="spacingAndGlyphs">0 b/s</text><text x="1387.0" y="1395.8" font-size="24" fill="#c7d0d9" stroke="#c7d0d9" stroke-width="0.4" text-anchor="middle" textLength="56.1" lengthAdjust="spacingAndGlyphs">16:29</text><text x="1561.8" y="1395.8" font-size="24" fill="#c7d0d9" stroke="#c7d0d9" stroke-width="0.4" text-anchor="middle" textLength="56.1" lengthAdjust="spacingAndGlyphs">16:30</text><text x="1736.6" y="1395.8" font-size="24" fill="#c7d0d9" stroke="#c7d0d9" stroke-width="0.4" text-anchor="middle" textLength="56.1" lengthAdjust="spacingAndGlyphs">16:31</text><text x="1911.4" y="1395.8" font-size="24" fill="#c7d0d9" stroke="#c7d0d9" stroke-width="0.4" text-anchor="middle" textLength="56.1" lengthAdjust="spacingAndGlyphs">16:32</text><text x="2086.2" y="1395.8" font-size="24" fill="#c7d0d9" stroke="#c7d0d9" stroke-width="0.4" text-anchor="middle" textLength="56.1" lengthAdjust="spacingAndGlyphs">16:33</text><clipPath id="c1212_904"><rect x="1336" y="964" width="874" height="400"/></clipPath><g clip-path="url(#c1212_904)"><path d="M1299.6,1362 L1299.6,1180.0 L1343.3,1180.0 L1387.0,1172.0 L1430.7,1185.0 L1474.4,1176.0 L1518.1,1190.0 L1561.8,1178.0 L1605.5,1183.0 L1649.2,1170.0 L1692.9,1184.0 L1736.6,1174.4 L1780.3,1182.2 L1824.0,1165.0 L1867.7,1168.7 L1911.4,1163.0 L1955.1,1189.5 L1998.8,1186.2 L2042.5,1182.6 L2086.2,1169.1 L2129.9,1146.6 L2173.6,1077.6 L2173.6,1362 Z" fill="rgba(126,178,109,0.1)"/><polyline points="1299.6,1180.0 1343.3,1180.0 1387.0,1172.0 1430.7,1185.0 1474.4,1176.0 1518.1,1190.0 1561.8,1178.0 1605.5,1183.0 1649.2,1170.0 1692.9,1184.0 1736.6,1174.4 1780.3,1182.2 1824.0,1165.0 1867.7,1168.7 1911.4,1163.0 1955.1,1189.5 1998.8,1186.2 2042.5,1182.6 2086.2,1169.1 2129.9,1146.6 2173.6,1077.6" fill="none" stroke="#84bb72" stroke-width="2.2" stroke-linejoin="round"/><path d="M1336,1362 H2173.6" stroke="#eab839" stroke-width="2.2"/></g><rect x="1240" y="1504" width="1002" height="50" fill="#1b1c20"/><clipPath id="l1212_904"><rect x="1232" y="1404" width="1010" height="160"/></clipPath><g clip-path="url(#l1212_904)"><path d="M1265.5,1478 H1286.5" stroke="#84bb72" stroke-width="2"/><path d="M1265.5,1528 H1286.5" stroke="#eab839" stroke-width="2"/><text x="1305.8" y="1485.7" font-size="24" fill="#d8d9da" stroke="#d8d9da" stroke-width="0.4" textLength="655.1" lengthAdjust="spacingAndGlyphs">{ifc=&quot;bundle1_177&quot;, instance=&quot;10.10.10.20:9001&quot;, job=&quot;router&quot;}</text><text x="1305.8" y="1535.7" font-size="24" fill="#d8d9da" stroke="#d8d9da" stroke-width="0.4" textLength="655.1" lengthAdjust="spacingAndGlyphs">{ifc=&quot;bundle1_177&quot;, instance=&quot;10.10.10.20:9001&quot;, job=&quot;router&quot;}</text><text x="2154.0" y="1442.3" font-size="24" fill="#4da4e6" font-weight="bold" text-anchor="end" textLength="38.5" lengthAdjust="spacingAndGlyphs">min</text><text x="2326.1" y="1442.3" font-size="24" fill="#4da4e6" font-weight="bold" text-anchor="end" textLength="44.0" lengthAdjust="spacingAndGlyphs">max</text><text x="2154.0" y="1485.7" font-size="24" fill="#d8d9da" stroke="#d8d9da" stroke-width="0.4" text-anchor="end" textLength="120.1" lengthAdjust="spacingAndGlyphs">1.822 Kib/s</text><text x="2154.0" y="1535.5" font-size="24" fill="#d8d9da" stroke="#d8d9da" stroke-width="0.4" text-anchor="end" textLength="53.4" lengthAdjust="spacingAndGlyphs">0 b/s</text><text x="2326.1" y="1485.7" font-size="24" fill="#d8d9da" stroke="#d8d9da" stroke-width="0.4" text-anchor="end" textLength="120.1" lengthAdjust="spacingAndGlyphs">3.033 Kib/s</text><text x="2326.1" y="1535.5" font-size="24" fill="#d8d9da" stroke="#d8d9da" stroke-width="0.4" text-anchor="end" textLength="53.4" lengthAdjust="spacingAndGlyphs">0 b/s</text></g><text x="2781.5" y="944.0" font-size="29" fill="#ccd1d8" font-weight="bold" text-anchor="middle" textLength="204.5" lengthAdjust="spacingAndGlyphs">hw:bundle1_178</text><path d="M2400,997.0 H3274 M2400,1087.0 H3274 M2400,1178.5 H3274 M2400,1270.5 H3274 M2400,1362.0 H3274 M2451.0,997 V1362 M2625.8,997 V1362 M2800.6,997 V1362 M2975.4,997 V1362 M3150.2,997 V1362" stroke="rgba(205,210,210,0.31)" stroke-width="1.7" fill="none"/><text x="2388.0" y="1004.6" font-size="24" fill="#c7d0d9" stroke="#c7d0d9" stroke-width="0.4" text-anchor="end" textLength="92.0" lengthAdjust="spacingAndGlyphs">3.9 Kib/s</text><text x="2388.0" y="1094.6" font-size="24" fill="#c7d0d9" stroke="#c7d0d9" stroke-width="0.4" text-anchor="end" textLength="92.0" lengthAdjust="spacingAndGlyphs">2.9 Kib/s</text><text x="2388.0" y="1186.1" font-size="24" fill="#c7d0d9" stroke="#c7d0d9" stroke-width="0.4" text-anchor="end" textLength="92.0" lengthAdjust="spacingAndGlyphs">2.0 Kib/s</text><text x="2388.0" y="1278.1" font-size="24" fill="#c7d0d9" stroke="#c7d0d9" stroke-width="0.4" text-anchor="end" textLength="90.7" lengthAdjust="spacingAndGlyphs">1000 b/s</text><text x="2388.0" y="1369.6" font-size="24" fill="#c7d0d9" stroke="#c7d0d9" stroke-width="0.4" text-anchor="end" textLength="51.3" lengthAdjust="spacingAndGlyphs">0 b/s</text><text x="2451.0" y="1395.8" font-size="24" fill="#c7d0d9" stroke="#c7d0d9" stroke-width="0.4" text-anchor="middle" textLength="56.1" lengthAdjust="spacingAndGlyphs">16:29</text><text x="2625.8" y="1395.8" font-size="24" fill="#c7d0d9" stroke="#c7d0d9" stroke-width="0.4" text-anchor="middle" textLength="56.1" lengthAdjust="spacingAndGlyphs">16:30</text><text x="2800.6" y="1395.8" font-size="24" fill="#c7d0d9" stroke="#c7d0d9" stroke-width="0.4" text-anchor="middle" textLength="56.1" lengthAdjust="spacingAndGlyphs">16:31</text><text x="2975.4" y="1395.8" font-size="24" fill="#c7d0d9" stroke="#c7d0d9" stroke-width="0.4" text-anchor="middle" textLength="56.1" lengthAdjust="spacingAndGlyphs">16:32</text><text x="3150.2" y="1395.8" font-size="24" fill="#c7d0d9" stroke="#c7d0d9" stroke-width="0.4" text-anchor="middle" textLength="56.1" lengthAdjust="spacingAndGlyphs">16:33</text><clipPath id="c2276_904"><rect x="2400" y="964" width="874" height="400"/></clipPath><g clip-path="url(#c2276_904)"><path d="M2363.6,1362 L2363.6,1180.0 L2407.3,1183.8 L2451.0,1162.6 L2494.7,1174.8 L2538.4,1166.6 L2582.1,1185.8 L2625.8,1123.4 L2669.5,1134.0 L2713.2,1131.5 L2756.9,1191.1 L2800.6,1167.0 L2844.3,1172.9 L2888.0,1148.4 L2931.7,1171.6 L2975.4,1154.5 L3019.1,1181.9 L3062.8,1169.6 L3106.5,1186.0 L3150.2,1169.6 L3193.9,1143.1 L3237.6,1068.7 L3237.6,1362 Z" fill="rgba(126,178,109,0.1)"/><polyline points="2363.6,1180.0 2407.3,1183.8 2451.0,1162.6 2494.7,1174.8 2538.4,1166.6 2582.1,1185.8 2625.8,1123.4 2669.5,1134.0 2713.2,1131.5 2756.9,1191.1 2800.6,1167.0 2844.3,1172.9 2888.0,1148.4 2931.7,1171.6 2975.4,1154.5 3019.1,1181.9 3062.8,1169.6 3106.5,1186.0 3150.2,1169.6 3193.9,1143.1 3237.6,1068.7" fill="none" stroke="#84bb72" stroke-width="2.2" stroke-linejoin="round"/><path d="M2400,1362 H3237.6" stroke="#eab839" stroke-width="2.2"/></g><rect x="2304" y="1504" width="1002" height="50" fill="#1b1c20"/><clipPath id="l2276_904"><rect x="2296" y="1404" width="1010" height="160"/></clipPath><g clip-path="url(#l2276_904)"><path d="M2329.5,1478 H2350.5" stroke="#84bb72" stroke-width="2"/><path d="M2329.5,1528 H2350.5" stroke="#eab839" stroke-width="2"/><text x="2369.8" y="1485.7" font-size="24" fill="#d8d9da" stroke="#d8d9da" stroke-width="0.4" textLength="655.0" lengthAdjust="spacingAndGlyphs">{ifc=&quot;bundle1_178&quot;, instance=&quot;10.10.10.20:9001&quot;, job=&quot;router&quot;}</text><text x="2369.8" y="1535.7" font-size="24" fill="#d8d9da" stroke="#d8d9da" stroke-width="0.4" textLength="655.0" lengthAdjust="spacingAndGlyphs">{ifc=&quot;bundle1_178&quot;, instance=&quot;10.10.10.20:9001&quot;, job=&quot;router&quot;}</text><text x="3217.9" y="1442.3" font-size="24" fill="#4da4e6" font-weight="bold" text-anchor="end" textLength="38.5" lengthAdjust="spacingAndGlyphs">min</text><text x="3390.0" y="1442.3" font-size="24" fill="#4da4e6" font-weight="bold" text-anchor="end" textLength="44.0" lengthAdjust="spacingAndGlyphs">max</text><text x="3217.9" y="1485.7" font-size="24" fill="#d8d9da" stroke="#d8d9da" stroke-width="0.4" text-anchor="end" textLength="120.1" lengthAdjust="spacingAndGlyphs">1.822 Kib/s</text><text x="3217.9" y="1535.5" font-size="24" fill="#d8d9da" stroke="#d8d9da" stroke-width="0.4" text-anchor="end" textLength="53.4" lengthAdjust="spacingAndGlyphs">0 b/s</text><text x="3390.0" y="1485.7" font-size="24" fill="#d8d9da" stroke="#d8d9da" stroke-width="0.4" text-anchor="end" textLength="120.1" lengthAdjust="spacingAndGlyphs">3.129 Kib/s</text><text x="3390.0" y="1535.5" font-size="24" fill="#d8d9da" stroke="#d8d9da" stroke-width="0.4" text-anchor="end" textLength="53.4" lengthAdjust="spacingAndGlyphs">0 b/s</text></g><text x="653.5" y="1628.0" font-size="29" fill="#ccd1d8" font-weight="bold" text-anchor="middle" textLength="204.5" lengthAdjust="spacingAndGlyphs">hw:bundle1_179</text><text x="1717.5" y="1628.0" font-size="29" fill="#ccd1d8" font-weight="bold" text-anchor="middle" textLength="204.5" lengthAdjust="spacingAndGlyphs">hw:bundle1_185</text><text x="2781.5" y="1628.0" font-size="29" fill="#ccd1d8" font-weight="bold" text-anchor="middle" textLength="204.5" lengthAdjust="spacingAndGlyphs">hw:bundle1_186</text><path d="M769.5,932 L776,938.5 L782.5,932" fill="none" stroke="#8e8e93" stroke-width="2.4" stroke-linecap="round"/><path d="M1180,1564 H1188 V1556" fill="none" stroke="#5f5f60" stroke-width="4"/><rect x="810" y="1061" width="894" height="146" rx="6" fill="#141414"/><text x="1256.8" y="1101.0" font-size="24" fill="#d8d9da" font-weight="bold" text-anchor="middle" textLength="224.3" lengthAdjust="spacingAndGlyphs">2020-10-13 16:31:15</text><path d="M834,1133.2 H853" stroke="#84bb72" stroke-width="4.5"/><path d="M834,1168.6 H853" stroke="#eab839" stroke-width="4.5"/><text x="858.2" y="1142.0" font-size="24" fill="#d8d9da" stroke="#d8d9da" stroke-width="0.4" textLength="665.8" lengthAdjust="spacingAndGlyphs">{ifc=&quot;bundle1_175&quot;, instance=&quot;10.10.10.20:9001&quot;, job=&quot;router&quot;}:</text><text x="858.2" y="1176.8" font-size="24" fill="#d8d9da" stroke="#d8d9da" stroke-width="0.4" textLength="665.8" lengthAdjust="spacingAndGlyphs">{ifc=&quot;bundle1_175&quot;, instance=&quot;10.10.10.20:9001&quot;, job=&quot;router&quot;}:</text><text x="1683.2" y="1142.0" font-size="24" fill="#d8d9da" font-weight="bold" text-anchor="end" textLength="122.5" lengthAdjust="spacingAndGlyphs">1.831 Kib/s</text><text x="1683.2" y="1176.8" font-size="24" fill="#d8d9da" font-weight="bold" text-anchor="end" textLength="54.6" lengthAdjust="spacingAndGlyphs">0 b/s</text></svg></body></html>
